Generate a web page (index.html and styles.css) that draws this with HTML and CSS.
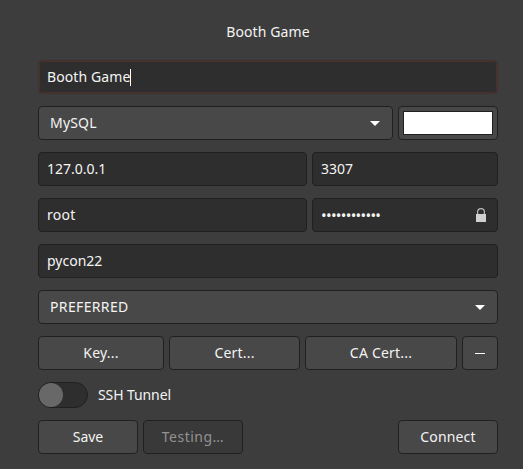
FILE: index.html
```html
<!DOCTYPE html>
<html lang="en">
<head>
<meta charset="utf-8">
<title>Booth Game</title>
<link rel="stylesheet" href="styles.css">
</head>
<body>
<main class="dialog">
  <h1 class="title"><span class="t-title">Booth Game</span></h1>
  <div class="row"><div class="entry focused grow"><span class="t-title">Booth Game</span><i class="caret"></i></div></div>
  <div class="row">
    <div class="combo grow"><span class="t-mysql">MySQL</span><svg class="arrow" viewBox="0 0 10 5"><path d="M0 0h10L5 5z"/></svg></div>
    <div class="button color"><div class="swatch"></div></div>
  </div>
  <div class="row">
    <div class="entry grow"><span>127.0.0.1</span></div>
    <div class="entry side"><span>3307</span></div>
  </div>
  <div class="row">
    <div class="entry grow"><span class="t-root">root</span></div>
    <div class="entry side"><span class="password">••••••••••••</span>
      <svg class="lock" viewBox="0 0 10 14"><path d="M0 6h10v8H0z"/><path class="shackle" d="M1.6 6V4a3.4 3.4 0 0 1 6.8 0v2"/></svg>
    </div>
  </div>
  <div class="row"><div class="entry grow"><span>pycon22</span></div></div>
  <div class="row"><div class="combo grow"><span class="t-pref">PREFERRED</span><svg class="arrow" viewBox="0 0 10 5"><path d="M0 0h10L5 5z"/></svg></div></div>
  <div class="row">
    <div class="button key"><span class="t-file">Key...</span></div>
    <div class="button cert"><span class="t-file">Cert...</span></div>
    <div class="button ca"><span class="t-file">CA Cert...</span></div>
    <div class="button remove"><i class="minus"></i></div>
  </div>
  <div class="row ssh"><div class="switch"><i class="knob"></i></div><span class="t-ssh">SSH Tunnel</span></div>
  <div class="row">
    <div class="button action"><span>Save</span></div>
    <div class="button action disabled"><span class="t-testing">Testing…</span></div>
    <div class="button action connect"><span class="t-connect">Connect</span></div>
  </div>
</main>
</body>
</html>
```
FILE: styles.css
```css
* { box-sizing: border-box; }
body {
  margin: 0;
  height: 469px;
  overflow: hidden;
  background: #3d3d3d;
  color: #f4f4f3;
  font: 14px/20px "Noto Sans", sans-serif;
}
.dialog {
  display: flex;
  flex-direction: column;
  gap: 12px;
  width: 460px;
  margin-left: 38px;
  padding-top: 22px;
}
.title {
  margin: 0 0 6px;
  height: 20px;
  font-size: 14px;
  font-weight: 400;
  text-align: center;
}
.row { display: flex; gap: 5px; height: 34px; }
.row span { white-space: nowrap; }
.grow { flex: 1; }
.entry, .combo, .button {
  display: flex;
  align-items: center;
  height: 34px;
  border: 1px solid #202020;
  border-radius: 4px;
}
.entry { padding: 0 8px; background: #2e2e2e; }
.focused { border-color: #41302d; box-shadow: inset 0 0 0 1px #4b322e; }
.caret { width: 1px; height: 17px; background: #fff; }
.combo { justify-content: space-between; padding: 0 12px 0 11px; background: #484848; }
.arrow { width: 10px; height: 5px; fill: #fff; }
.button { justify-content: center; background: #484848; }
.color { width: 100px; }
.swatch { width: 90px; height: 24px; border: 1px solid #202020; background: #fff; }
.side { width: 186px; }
.password { font-size: 15px; letter-spacing: -0.7px; }
.lock { width: 10px; height: 14px; margin: 0 3px 0 auto; fill: #d0d0d0; }
.shackle { fill: none; stroke: #b8b8b8; stroke-width: 1.2; }
.key { width: 126px; }
.cert { width: 131px; }
.ca { width: 152px; }
.remove { width: 36px; }
.minus { width: 10px; height: 1px; background: #fff; }
.row.ssh { height: 26px; gap: 10px; align-items: center; }
.switch { width: 50px; height: 26px; border: 1px solid #202020; border-radius: 13px; background: #2e2e2e; }
.knob { display: block; width: 24px; height: 24px; border-radius: 50%; background: #686868; }
.action { width: 100px; }
.disabled { background: #393939; color: #929292; }
.connect { margin-left: auto; }
.t-title { letter-spacing: 0.1px; }
.t-mysql { letter-spacing: 0.2px; }
.t-root { letter-spacing: 0.3px; }
.t-pref { letter-spacing: 0.35px; }
.t-file { letter-spacing: 0.2px; }
.t-ssh { letter-spacing: -0.1px; }
.t-testing { letter-spacing: 0.5px; }
.t-connect { letter-spacing: 0.15px; }
```
